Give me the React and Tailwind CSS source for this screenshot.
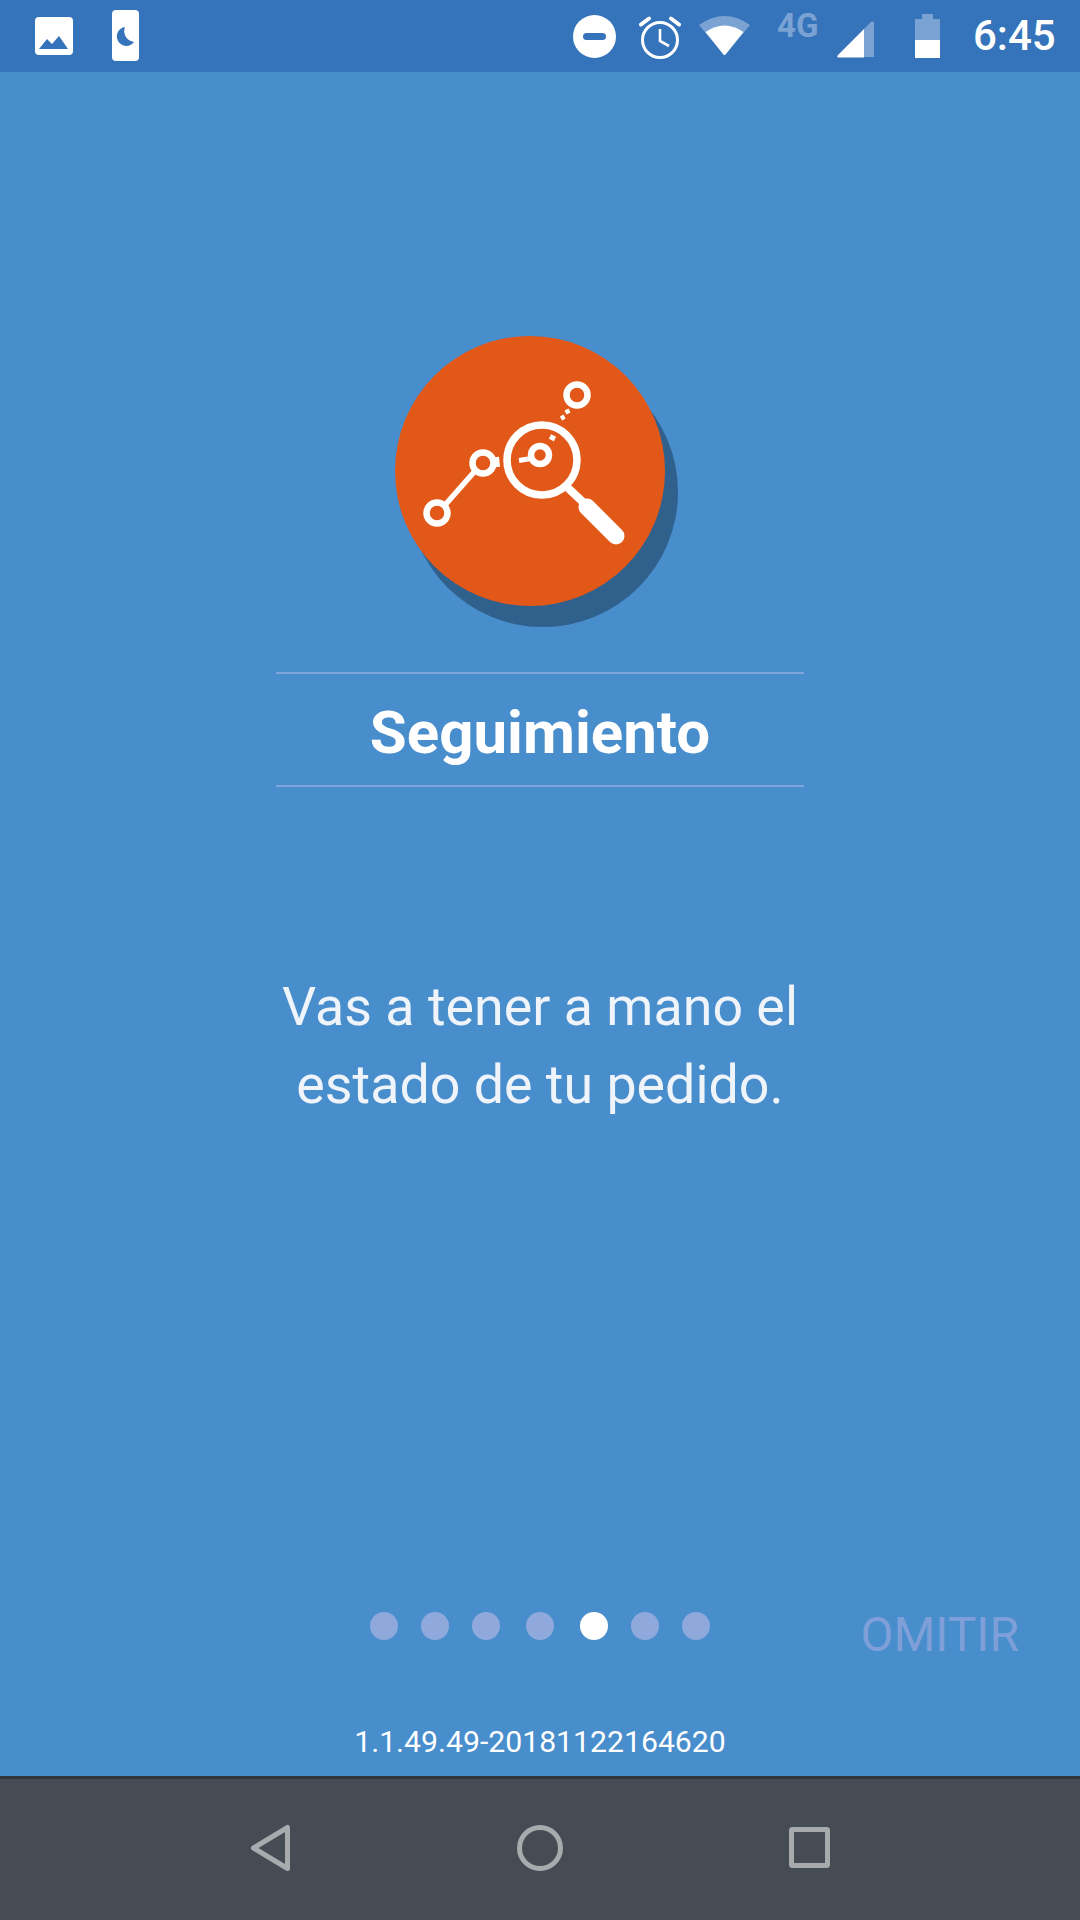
function StatusIcons() {
  return (
    <div className="flex items-start">
      {/* do not disturb */}
      <svg className="mt-[15px] ml-[573px]" width="43" height="43" viewBox="0 0 43 43">
        <circle cx="21.5" cy="21.5" r="21.5" fill="#fff" />
        <rect x="10" y="18" width="23" height="7" rx="3.5" fill="#3574ba" />
      </svg>
      {/* alarm */}
      <svg className="mt-[15px] ml-[23px]" width="42" height="44" viewBox="0 0 42 44" fill="none" stroke="#fff">
        <circle cx="21" cy="25" r="17.5" strokeWidth="3" />
        <path d="M21 14v12l9 5" strokeWidth="2.6" />
        <path d="M2 9.5 10 3.5M40 9.5 32 3.5" strokeWidth="4" strokeLinecap="round" />
      </svg>
      {/* wifi */}
      <svg className="mt-[15px] ml-[18px]" width="51" height="40" viewBox="0 0 51 40">
        <path d="M0 10Q25.5-8 51 10L26.5 39.5Q25.5 40.5 24.5 39.5Z" fill="#7aa3d4" />
        <path d="M6.5 17Q25.5 4 44.5 17L26.5 39.5Q25.5 40.5 24.5 39.5Z" fill="#fff" />
      </svg>
      <span className="ml-[27px] mt-[5px] text-[33px] leading-[42px] font-bold text-[#7aa3d4] w-[60px]">4G</span>
      {/* signal */}
      <svg className="mt-[21px]" width="37" height="37" viewBox="0 0 37 37">
        <path d="M37 1V36H27V8L34 1Q36 0 37 1Z" fill="#7aa3d4" />
        <path d="M27 8V36.5H2Q-1 36.5 1 34Z" fill="#fff" />
      </svg>
      {/* battery */}
      <svg className="mt-[14px] ml-[41px]" width="25" height="44" viewBox="0 0 25 44">
        <path d="M7 0H18V5H25V26H0V5H7Z" fill="#7aa3d4" />
        <rect x="0" y="26" width="25" height="18" fill="#fff" />
      </svg>
      <span className="ml-[33px] mt-[12px] text-[42px] leading-[48px] font-medium text-white">6:45</span>
    </div>
  );
}

function Lens() {
  return (
    <svg className="w-full h-full" viewBox="15 16 270 270" fill="none" stroke="#fff">
      <circle cx="197" cy="75" r="10.5" strokeWidth="6.5" />
      <path d="M185.5 92.5 189.5 90.5M181 98.5 184.5 96.5" strokeWidth="4.5" />
      <circle cx="162" cy="140" r="35" strokeWidth="7.5" />
      <circle cx="160" cy="135" r="9" strokeWidth="6.5" />
      <path d="M139 140.5 151 138.5M170 116.5 175 119" strokeWidth="5" />
      <path d="M188 168 205 184" strokeWidth="8" />
      <path d="M207 187 236 216" strokeWidth="17" strokeLinecap="round" />
      <circle cx="103" cy="143" r="10.5" strokeWidth="6.5" />
      <circle cx="57" cy="193" r="10.5" strokeWidth="6.5" />
      <path d="M95 151 65 185" strokeWidth="5.5" />
      <path d="M116.5 137 117.5 147" strokeWidth="5" />
    </svg>
  );
}

export default function App() {
  const dots = [0, 1, 2, 3, 4, 5, 6];

  return (
    <div className="w-[1080px] h-[1920px] flex flex-col bg-[#488dcc] overflow-hidden [font-family:Roboto,sans-serif]">
      <div className="relative h-[72px] shrink-0 bg-[#3574ba]">
        <svg className="absolute left-[35px] top-[17px]" width="38" height="38" viewBox="0 0 38 38">
          <rect width="38" height="38" rx="4" fill="#fff" />
          <path d="M4 32 12 22 17 27 24 19 33 32Z" fill="#3574ba" />
        </svg>
        <svg className="absolute left-[112px] top-[10px]" width="27" height="51" viewBox="0 0 27 51">
          <rect width="27" height="51" rx="4" fill="#fff" />
          <path d="M13 17A9.5 9.5 0 1 0 22 32 11 11 0 0 1 13 17Z" fill="#3574ba" />
        </svg>
        <StatusIcons />
      </div>

      <div className="flex-1 flex flex-col items-center">
        <div className="mt-[264px] ml-[-21px] w-[270px] h-[270px] rounded-full bg-[#e25819] shadow-[13px_21px_0_#30608c]">
          <Lens />
        </div>

        <div className="mt-[66px] w-[528px] h-[115px] pt-[7px] flex items-center justify-center border-y-2 border-[#7fa3dc]">
          <h1 className="text-[60px] font-bold text-white">Seguimiento</h1>
        </div>

        <p className="mt-[181px] text-[53.75px] leading-[78px] text-center text-[#eef4fa]">
          Vas a tener a mano el
          <br />
          estado de tu pedido.
        </p>

        <div className="mt-auto w-full flex items-start pl-[370px]">
          <div className="flex gap-[23px]">
            {dots.map((d) => (
              <span
                key={d}
                className={`w-[28px] h-[28px] rounded-full ${d === 3 || d === 4 ? 'ml-[3px]' : ''} ${d === 4 ? 'bg-white' : 'bg-[#8fa9dc]'}`}
              />
            ))}
          </div>
          <span className="ml-auto mr-[61px] mt-[-13px] text-[48px] leading-[72px] text-[#7f9fd8]">OMITIR</span>
        </div>

        <p className="mt-[51px] mb-[14px] text-[30.2px] leading-[40px] text-white">1.1.49.49-20181122164620</p>
      </div>

      <div className="h-[144px] shrink-0 flex items-start bg-[#454c53] border-t-[3px] border-[#31373b]">
        <svg className="mt-[44px] ml-[248px]" width="44" height="50" viewBox="0 0 44 50" fill="none" stroke="#a7abad" strokeWidth="5" strokeLinejoin="round">
          <path d="M5.5 25 39.5 4.5V45.5Z" />
        </svg>
        <svg className="mt-[46px] ml-[225px]" width="46" height="46" viewBox="0 0 46 46" fill="none" stroke="#a7abad" strokeWidth="5">
          <circle cx="23" cy="23" r="20.5" />
        </svg>
        <svg className="mt-[48px] ml-[226px]" width="41" height="41" viewBox="0 0 41 41" fill="none" stroke="#a7abad" strokeWidth="5" strokeLinejoin="round">
          <rect x="2.5" y="2.5" width="36" height="36" rx="1" />
        </svg>
      </div>
    </div>
  );
}
